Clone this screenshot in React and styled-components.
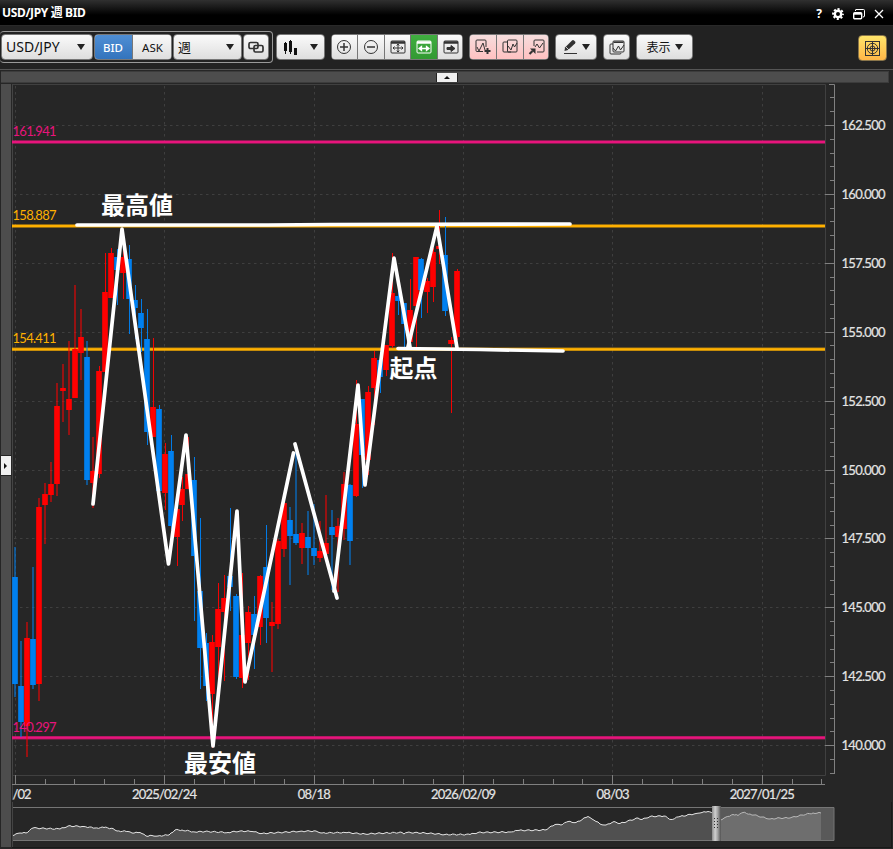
import React from "react";
import styled, { createGlobalStyle, css } from "styled-components";

const GlobalStyle = createGlobalStyle`
  * {
    box-sizing: border-box;
  }

  body {
    margin: 0;
    background: #222;
    overflow: hidden;
  }
`;

const RED = "#ff0000";
const BLUE = "#0080f0";
const PINK = "#e8147c";
const ORANGE = "#ffb000";

// [up, high, body top, body bottom, low] in chart pixels
const candles = [
  [0, 547, 577, 684, 697],
  [0, 641, 686, 722, 737],
  [1, 622, 638, 726, 757],
  [0, 567, 639, 685, 689],
  [1, 498, 507, 684, 701],
  [1, 483, 494, 505, 544],
  [1, 462, 484, 495, 502],
  [1, 383, 406, 484, 496],
  [1, 364, 388, 391, 422],
  [1, 341, 399, 410, 435],
  [1, 285, 349, 398, 398],
  [1, 309, 337, 353, 380],
  [0, 341, 357, 480, 485],
  [1, 437, 471, 483, 508],
  [1, 366, 371, 474, 478],
  [1, 253, 292, 372, 372],
  [1, 248, 253, 298, 298],
  [0, 249, 257, 270, 305],
  [1, 235, 257, 273, 299],
  [0, 245, 259, 299, 334],
  [0, 285, 300, 308, 339],
  [0, 299, 313, 328, 352],
  [0, 309, 339, 432, 445],
  [1, 338, 407, 437, 437],
  [0, 405, 409, 491, 491],
  [1, 443, 454, 493, 510],
  [0, 435, 451, 526, 530],
  [1, 507, 509, 537, 566],
  [1, 477, 489, 505, 521],
  [1, 437, 474, 489, 489],
  [0, 457, 480, 556, 621],
  [0, 518, 591, 648, 689],
  [0, 633, 643, 686, 701],
  [1, 635, 642, 694, 748],
  [1, 583, 609, 647, 680],
  [1, 575, 598, 612, 681],
  [0, 508, 576, 587, 611],
  [0, 594, 596, 677, 679],
  [1, 573, 635, 678, 688],
  [1, 606, 612, 643, 680],
  [0, 596, 614, 635, 669],
  [1, 575, 576, 627, 645],
  [0, 525, 567, 618, 643],
  [1, 602, 622, 626, 672],
  [1, 539, 541, 624, 629],
  [1, 502, 503, 549, 557],
  [0, 507, 520, 536, 585],
  [0, 452, 534, 543, 545],
  [1, 523, 533, 548, 564],
  [0, 511, 537, 548, 575],
  [0, 504, 548, 556, 565],
  [1, 521, 551, 558, 562],
  [1, 495, 543, 554, 554],
  [0, 510, 527, 535, 590],
  [1, 518, 526, 537, 592],
  [1, 472, 484, 529, 540],
  [0, 484, 485, 541, 565],
  [1, 380, 424, 496, 497],
  [0, 399, 399, 455, 488],
  [1, 386, 392, 460, 475],
  [1, 351, 358, 388, 425],
  [0, 357, 360, 377, 393],
  [1, 345, 345, 370, 376],
  [1, 253, 293, 346, 348],
  [0, 285, 296, 301, 315],
  [0, 303, 303, 324, 348],
  [1, 279, 310, 342, 347],
  [1, 257, 257, 306, 348],
  [0, 258, 259, 290, 318],
  [1, 278, 281, 292, 313],
  [1, 248, 252, 287, 302],
  [1, 210, 246, 249, 264],
  [0, 217, 255, 311, 316],
  [1, 337, 340, 344, 413],
  [1, 269, 271, 337, 340],
];

const prices = [
  "162.500",
  "160.000",
  "157.500",
  "155.000",
  "152.500",
  "150.000",
  "147.500",
  "145.000",
  "142.500",
  "140.000",
];

const dates = [
  ["/02", 22, 19],
  ["2025/02/24", 164.5, 65],
  ["08/18", 314.2, 33],
  ["2026/02/09", 463.5, 65],
  ["08/03", 613, 33],
  ["2027/01/25", 762.3, 65],
];

const levels = [
  { price: "161.941", y: 142, color: PINK },
  { price: "158.887", y: 226, color: ORANGE },
  { price: "154.411", y: 349.3, color: ORANGE },
  { price: "140.297", y: 737.7, color: PINK },
];

const strokes = [
  "93,504 122,229 168.5,564 186,435 213,746 237,511 245,682 293.5,453",
  "295,444 337,598",
  "334,591 358,385 365,485 394,258 410,347",
  "408,347 437,226 457,348",
  "77,225 268,225 330,224.5 570,224",
  "398,348.5 480,349.5 563,351",
];

const notes = [
  ["最高値", 101, 213.5, 72],
  ["起点", 389.5, 376.5, 48],
  ["最安値", 184, 771.5, 72],
];

const overview = [
  [12, 835.5], [20, 833], [26, 833], [33, 828], [45, 828.5], [60, 829],
  [68, 826], [84, 826.5], [95, 828], [104, 827.5], [113, 828.5], [117, 831],
  [128, 831.5], [132, 833], [140, 832.5], [146, 836], [152, 835.5],
  [158, 836], [169, 835], [175, 830], [182, 830], [195, 832], [205, 831.5],
  [228, 832.5], [240, 831], [252, 831.5], [262, 833.5], [280, 832.5],
  [300, 831.3], [316, 831], [322, 833], [345, 832.5], [365, 834],
  [385, 833], [402, 832.5], [404, 834], [407, 832.5], [425, 833],
  [445, 834.5], [470, 834.5], [478, 832.5], [510, 832], [517, 830.5],
  [545, 830], [555, 824.5], [561, 825], [568, 821.5], [576, 822.5],
  [588, 816.5], [592, 819], [598, 822], [600, 824], [606, 825],
  [614, 821.5], [620, 823.5], [638, 818], [642, 819.5], [650, 816.5],
  [664, 816], [671, 819.5], [680, 816.5], [696, 813.5], [700, 813],
  [708, 811.5], [713, 813.5], [720, 820], [726, 817], [733, 814.5],
  [738, 815.5], [743, 812.5], [750, 814], [762, 817], [770, 819],
  [780, 818], [790, 818], [802, 815], [813, 813], [821, 813],
];

// fill in the small moves between the overview points
const detailed = overview.flatMap(([x, y], i) => {
  const next = overview[i + 1];
  if (!next) return [[x, y]];
  const count = Math.max(1, Math.round((next[0] - x) / 2));
  return Array.from({ length: count }, (_, k) => {
    const t = k / count;
    const wiggle = k ? Math.sin((x + k * 2) * 2.3) * 0.6 : 0;
    return [x + (next[0] - x) * t, y + (next[1] - y) * t + wiggle];
  });
});
const overviewLine = detailed
  .map(([x, y]) => `${x.toFixed(1)},${y.toFixed(1)}`)
  .join(" ");

const slotX = (i) => 15.2 + i * 5.975;
const priceY = (i) => 126 + i * 68.9;

const ChartIcon = ({ plus, copy, arrow, stack }) => (
  <Icon width="18" height="18" viewBox="0 0 18 18">
    {stack ? (
      <>
        <path d="M5 7V4q0-1 1-1h9q1 0 1 1v9q0 1-1 1H6q-1 0-1-1V7M5 6H3Q2 6 2 7v8q0 1 1 1h9q1 0 1-1" />
        <path d="M5.500 4.200h10" strokeWidth="1.600" />
        <path d="m5 10 2.500 3 3-5 2 4L16 7" />
      </>
    ) : copy ? (
      <>
        <path d="M6 4H3Q2 4 2 5v8q0 1 1 1h7" />
        <rect x="6.500" y="2" width="9.500" height="12" rx="1" />
        <path d="m7 8 3 4 2-6 1.500 3L16 5" />
      </>
    ) : arrow ? (
      <>
        <path d="M6 8V3q0-1 1-1h8q1 0 1 1v10q0 1-1 1H9" />
        <path d="m7 9 2-3 2.500 4L15 5" />
        <path d="M2 10.500h5.500V16z" fill="#333" stroke="none" />
        <path d="m1.500 16 3-3" strokeWidth="2.200" />
      </>
    ) : (
      <>
        <path d="M9 13.500H3q-1 0-1-1V3q0-1 1-1h8q1 0 1 1v6" />
        <path d="m3 9 2 4 4-8 2 7" />
      </>
    )}
    {plus && <path d="M10.500 13h6M13.500 10v6" strokeWidth="2" />}
  </Icon>
);

const WindowIcon = ({ kind, light }) => (
  <Icon width="18" height="16" viewBox="0 0 18 16" $light={light}>
    <rect x="2" y="2" width="14" height="12" rx="1" />
    <path d="M2 3.500h14" strokeWidth="2.500" />
    {kind === "move" && (
      <path d="M4 9h10M9 5.500v7.500M5.500 7.500 4 9l1.500 1.500M12.500 7.500 14 9l-1.500 1.500M7.700 6.500 9 5l1.300 1.500M7.700 11.700 9 13l1.300-1.300" />
    )}
    {kind === "wide" && (
      <path d="M4 9.500h10M6.500 7.500l-2.500 2 2.500 2zM11.500 7.500l2.500 2-2.500 2z" fill="#fff" strokeWidth="1.300" />
    )}
    {kind === "right" && (
      <path d="M5 8.500h4v-2l4 3-4 3v-2H5z" fill="#333" />
    )}
  </Icon>
);

const App = () => {
  return (
    <Window>
      <GlobalStyle />
      <TitleBar>
        <Title>USD/JPY 週 BID</Title>
        <WindowControls>
          <Help>?</Help>
          <svg width="12" height="12" viewBox="0 0 12 12">
            <circle cx="6" cy="6" r="3.200" fill="none" stroke="#fff" strokeWidth="2.400" />
            <circle cx="6" cy="6" r="4.900" fill="none" stroke="#fff" strokeWidth="2" strokeDasharray="2.100 1.748" strokeDashoffset="1.050" />
          </svg>
          <svg width="12" height="11" viewBox="0 0 12 11" fill="none" stroke="#fff">
            <path d="M2.500 2V1q0-.5.500-.5h7.500q1 0 1 1V7q0 1-1.500 1" />
            <rect x=".7" y="3.700" width="8" height="6" rx="1" strokeWidth="1.400" />
            <path d="M1 4.800h8" strokeWidth="1.800" />
          </svg>
          <svg width="10" height="10" viewBox="0 0 10 10">
            <path d="m1 1 8 8M9 1 1 9" stroke="#fff" strokeWidth="1.300" />
          </svg>
        </WindowControls>
      </TitleBar>

      <Toolbar>
        <PairGroup>
          <Select $width={92}>
            USD/JPY
            <Caret />
          </Select>
          <Segments>
            <Button $width={38} $tone="blue">BID</Button>
            <Button $width={40}>ASK</Button>
          </Segments>
          <Select $width={69} $fontSize={13}>
            週
            <Caret />
          </Select>
          <Segments>
            <Button $width={26}>
              <Icon width="18" height="16" viewBox="0 0 18 16">
                <rect x="2" y="3.500" width="9" height="6" rx="1.500" strokeWidth="1.700" />
                <rect x="7" y="6.500" width="9" height="6.500" rx="1.500" strokeWidth="1.700" />
              </Icon>
            </Button>
          </Segments>
        </PairGroup>

        <Segments>
          <Button $width={49} $gap={12}>
            <svg width="15" height="17" viewBox="0 0 15 17">
              <path d="M1 4h3v8H1zM6 2h3v11H6zM11 9h3v7h-3zM2 3h1v12H2zM7 1h1v14H7z" fill="#111" />
            </svg>
            <Caret />
          </Button>
        </Segments>

        <Segments>
          <Button $width={26}>
            <Icon width="16" height="16" viewBox="0 0 16 16">
              <circle cx="8" cy="8" r="6.500" />
              <path d="M4 8h8M8 4v8" strokeWidth="1.500" />
            </Icon>
          </Button>
          <Button $width={27}>
            <Icon width="16" height="16" viewBox="0 0 16 16">
              <circle cx="8" cy="8" r="6.500" />
              <path d="M4 8h8" strokeWidth="1.500" />
            </Icon>
          </Button>
          <Button $width={26}><WindowIcon kind="move" /></Button>
          <Button $width={27} $tone="green"><WindowIcon kind="wide" light /></Button>
          <Button $width={26}><WindowIcon kind="right" /></Button>
        </Segments>

        <Segments>
          <Button $width={27} $tone="pink"><ChartIcon plus /></Button>
          <Button $width={27} $tone="pink"><ChartIcon copy /></Button>
          <Button $width={26} $tone="pink"><ChartIcon arrow /></Button>
        </Segments>

        <Segments>
          <Button $width={42} $gap={4}>
            <svg width="15" height="16" viewBox="0 0 15 16">
              <path d="M1.500 12 2 8.500 9 1.500q1-1 2 0l1 1q1 1 0 2L5 11z" fill="#333" />
              <path d="m3 8 3 3" stroke="#eee" strokeWidth=".8" />
              <path d="M1 14.500h13" stroke="#333" />
            </svg>
            <Caret />
          </Button>
        </Segments>

        <Segments>
          <Button $width={27}><ChartIcon stack /></Button>
        </Segments>

        <Segments>
          <Button $width={57} $gap={4} $fontSize={12}>
            表示
            <Caret />
          </Button>
        </Segments>

        <TargetButton>
          <Icon width="17" height="17" viewBox="0 0 17 17">
            <rect x="1.500" y="1.500" width="14" height="14" />
            <circle cx="8.500" cy="8.500" r="5.200" />
            <circle cx="8.500" cy="8.500" r="2.500" />
            <path d="M1.500 8.500h14M8.500 1.500v14" />
          </Icon>
        </TargetButton>
      </Toolbar>

      <TopRail>
        <RailHandle>
          <svg width="8" height="4" viewBox="0 0 8 4">
            <path d="M1 4 4 1l3 3z" fill="#111" />
          </svg>
        </RailHandle>
      </TopRail>

      <Workspace>
        <SideRail>
          <RailHandle $vertical>
            <svg width="4" height="8" viewBox="0 0 4 8">
              <path d="m0 1 3 3-3 3z" fill="#111" />
            </svg>
          </RailHandle>
        </SideRail>
        <Panels>
          <Chart />
          <Overview />
        </Panels>
      </Workspace>
    </Window>
  );
};

const Chart = () => (
  <ChartSvg width="881" height="718" viewBox="12 84 881 718">
    <g stroke="#3f3f3f" strokeDasharray="2.500 3.500" strokeWidth="1">
      {prices.map((p, i) => (
        <path key={p} d={`M14 ${Math.round(priceY(i)) - 0.5}H825`} />
      ))}
      {dates.map(([label], i) => (
        <path key={label} d={`M${Math.floor(15.2 + i * 149.4) + 0.5} 86V775`} />
      ))}
    </g>
    <path d="M12 84.500H825.500V775.500H12" fill="none" stroke="#404040" />
    <path d="M12.500 84V800" fill="none" stroke="#444" />

    {levels.map((level) => (
      <g key={level.price} fill="none" stroke={level.color}>
        <path d={`M12 ${level.y}H825`} strokeWidth="3.400" opacity=".65" />
        <path d={`M12 ${level.y}H825`} strokeWidth="1.900" />
      </g>
    ))}

    {candles.map(([up, high, top, bottom, low], i) => {
      const x = slotX(i);
      const dim = i < 14 || (i > 42 && i < 57);
      const color = up ? RED : BLUE;
      return (
        <g key={i}>
          <rect
            x={Math.round(x) - (dim ? 1 : 0)}
            y={high}
            width={dim ? 2 : 1}
            height={low - high}
            fill={color}
            opacity={dim ? 0.52 : 0.95}
          />
          <rect
            x={Math.round(x - 3)}
            y={top}
            width="6"
            height={bottom - top}
            fill={color}
            opacity=".65"
          />
          <rect
            x={Math.round(x - 3) + 0.5}
            y={top}
            width="5"
            height={bottom - top}
            fill={color}
          />
        </g>
      );
    })}

    {levels.map((level) => (
      <LevelLabel
        key={level.price}
        x="12.500"
        y={Math.round(level.y) - 6}
        fill={level.color}
        textLength="44"
      >
        {level.price}
      </LevelLabel>
    ))}

    <g fill="none" stroke="#808080">
      <path d="M829 84.500H834.500V774" />
      <path d="M12 784.500H825" />
      {Array.from({ length: 53 }, (_, i) => {
        const y = Math.round(126 + (i - 3) * 13.78);
        const major = i >= 3 && (i - 3) % 5 === 0;
        if (y < 86 || y > 774) return null;
        return <path key={i} d={`M${major ? 825 : 830} ${y - 0.5}H834`} />;
      })}
      {Array.from({ length: 28 }, (_, i) => (
        <path
          key={i}
          d={`M${Math.floor(15.2 + i * 29.88) + 0.5} ${i % 5 === 0 ? 775 : 779}V784`}
        />
      ))}
    </g>
    {prices.map((price, i) => (
      <AxisLabel key={price} x="841.500" y={Math.round(priceY(i)) + 4} textLength="44">
        {price}
      </AxisLabel>
    ))}
    {dates.map(([label, x, width]) => (
      <AxisLabel key={label} x={x} y="799" textAnchor="middle" textLength={width}>
        {label}
      </AxisLabel>
    ))}

    <g fill="none" stroke="#fff" strokeWidth="3.700" strokeLinecap="round" strokeLinejoin="round">
      {strokes.map((points) => (
        <polyline key={points} points={points} />
      ))}
    </g>
    {notes.map(([text, x, y, width]) => (
      <NoteText key={text} x={x} y={y} textLength={width}>
        {text}
      </NoteText>
    ))}
  </ChartSvg>
);

const Overview = () => (
  <ChartSvg width="881" height="47" viewBox="12 802 881 47">
    <polygon points={`12,840 ${overviewLine} 821,840`} fill="#505050" />
    <polyline points={overviewLine} fill="none" stroke="#e4e4e4" />
    <rect x="716" y="807" width="118" height="34" fill="#8b8b8b" opacity=".5" />
    <path d="M12 807.500H834V840.500H12" fill="none" stroke="#757575" />
    <path d="M12.500 802V847" stroke="#444" />
    <defs>
      <linearGradient id="grip">
        <stop offset="0" stopColor="#8c8c8c" />
        <stop offset=".35" stopColor="#d0d0d0" />
        <stop offset=".65" stopColor="#a0a0a0" />
        <stop offset="1" stopColor="#515151" />
      </linearGradient>
    </defs>
    <rect x="712" y="806" width="9" height="35" fill="url(#grip)" />
    <path d="M714.500 818v12M717.500 818v12" stroke="#333" strokeDasharray="1 2" />
    <path d="M12 847.500H891.500V802" fill="none" stroke="#191919" />
  </ChartSvg>
);

const Window = styled.div`
  width: 893px;
  height: 849px;
  display: flex;
  flex-direction: column;
  background: #262626;
  overflow: hidden;
  font-family: "Noto Sans", "Noto Sans CJK JP", sans-serif;
`;

const TitleBar = styled.div`
  flex: none;
  height: 26px;
  padding: 0 9px 0 2px;
  display: flex;
  align-items: center;
  justify-content: space-between;
  background: linear-gradient(#303030, #000 60%);
  border-bottom: 1px solid #292929;
  color: #fff;
`;

const Title = styled.div`
  font-size: 12px;
  font-weight: 700;
  letter-spacing: -0.35px;
  line-height: 24px;
  white-space: nowrap;
`;

const WindowControls = styled.div`
  display: flex;
  align-items: center;
  gap: 9px;
  padding-top: 3px;
`;

const Help = styled.span`
  font-size: 12px;
  font-weight: 700;
  line-height: 12px;
  margin-right: 1px;
`;

const Toolbar = styled.div`
  flex: none;
  height: 44px;
  padding-top: 5px;
  display: flex;
  align-items: flex-start;
  gap: 6px;
  background: #222;
  border-bottom: 1px solid #555;

  > * {
    margin-top: 3px;
  }
`;

const PairGroup = styled.div`
  height: 32px;
  width: 273px;
  margin: 0 -3px 0 0;
  padding: 2px 1px;
  display: flex;
  gap: 1px;
  border: 1px solid #999;
  border-left: 0;
  border-radius: 4px;
`;

const segmentBox = css`
  height: 26px;
  border: 1px solid #777;
  border-radius: 4px;
  background: linear-gradient(#fafafa, #dedede);
  overflow: hidden;
`;

const Segments = styled.div`
  ${segmentBox}
  flex: none;
  display: flex;
`;

const Select = styled.div`
  ${segmentBox}
  flex: none;
  width: ${(p) => p.$width}px;
  padding: 0 7px 1px 4px;
  display: flex;
  align-items: center;
  justify-content: space-between;
  font-size: ${(p) => p.$fontSize || 14}px;
  line-height: 22px;
  color: #111;
`;

const tones = {
  plain: "linear-gradient(#fafafa, #dedede)",
  blue: "linear-gradient(#4f8ed4, #3374bd)",
  green: "linear-gradient(#40ae40, #329932)",
  pink: "linear-gradient(#f6dddd, #ffc1c1)",
};

const Button = styled.button`
  width: ${(p) => p.$width}px;
  height: 24px;
  padding: 0;
  display: flex;
  align-items: center;
  justify-content: center;
  gap: ${(p) => p.$gap || 0}px;
  border: 0;
  background: ${(p) => tones[p.$tone || "plain"]};
  color: ${(p) => (p.$tone === "blue" ? "#fff" : "#111")};
  font-family: inherit;
  font-size: ${(p) => p.$fontSize || 11.5}px;
  font-weight: ${(p) => (p.$tone === "blue" ? 500 : 400)};

  &:first-child {
    margin-left: -1px;
  }

  &:last-child {
    margin-right: -1px;
  }

  & + & {
    border-left: 1px solid #777;
  }
`;

const Caret = styled.span`
  width: 0;
  height: 0;
  border: 4px solid transparent;
  border-top: 6px solid #222;
  border-bottom: 0;
`;

const Icon = styled.svg`
  flex: none;
  fill: none;
  stroke: ${(p) => (p.$light ? "#fff" : "#333")};
`;

const TargetButton = styled.div`
  width: 29px;
  height: 26px;
  margin: 4px 6px 0 auto;
  display: flex;
  align-items: center;
  justify-content: center;
  border: 1px solid #89754a;
  border-radius: 4px;
  background: linear-gradient(#ffe56a, #ffb647);
`;

const TopRail = styled.div`
  flex: none;
  height: 12px;
  margin: 1px 4px 1px 1px;
  padding-left: 4px;
  display: flex;
  align-items: center;
  justify-content: center;
  background: #4d4d4d;
  border: 1px solid #3c3c3c;
  border-left: 0;
`;

const RailHandle = styled.div`
  width: ${(p) => (p.$vertical ? 10 : 22)}px;
  height: ${(p) => (p.$vertical ? 21 : 9)}px;
  display: flex;
  align-items: center;
  justify-content: center;
  background: #f0f0f0;
  border: solid #222;
  border-width: ${(p) => (p.$vertical ? "1px 0" : "0 1px")};
`;

const Workspace = styled.div`
  flex: none;
  height: 765px;
  display: flex;
`;

const SideRail = styled.div`
  flex: none;
  width: 10px;
  height: 763px;
  margin: 0 1px;
  display: flex;
  align-items: center;
  justify-content: flex-end;
  background: #4d4d4d;
`;

const Panels = styled.div`
  display: flex;
  flex-direction: column;
`;

const ChartSvg = styled.svg`
  flex: none;
  display: block;
`;

const AxisLabel = styled.text`
  font-family: "Lato", sans-serif;
  font-size: 13px;
  fill: #e4e4e4;
  stroke: #e4e4e4;
  stroke-width: 0.2px;
`;

const LevelLabel = styled.text`
  font-family: "Lato", sans-serif;
  font-size: 13px;
`;

const NoteText = styled.text`
  font-family: "Noto Sans CJK JP", sans-serif;
  font-size: 24px;
  font-weight: 700;
  fill: #fff;
`;

export default App;
